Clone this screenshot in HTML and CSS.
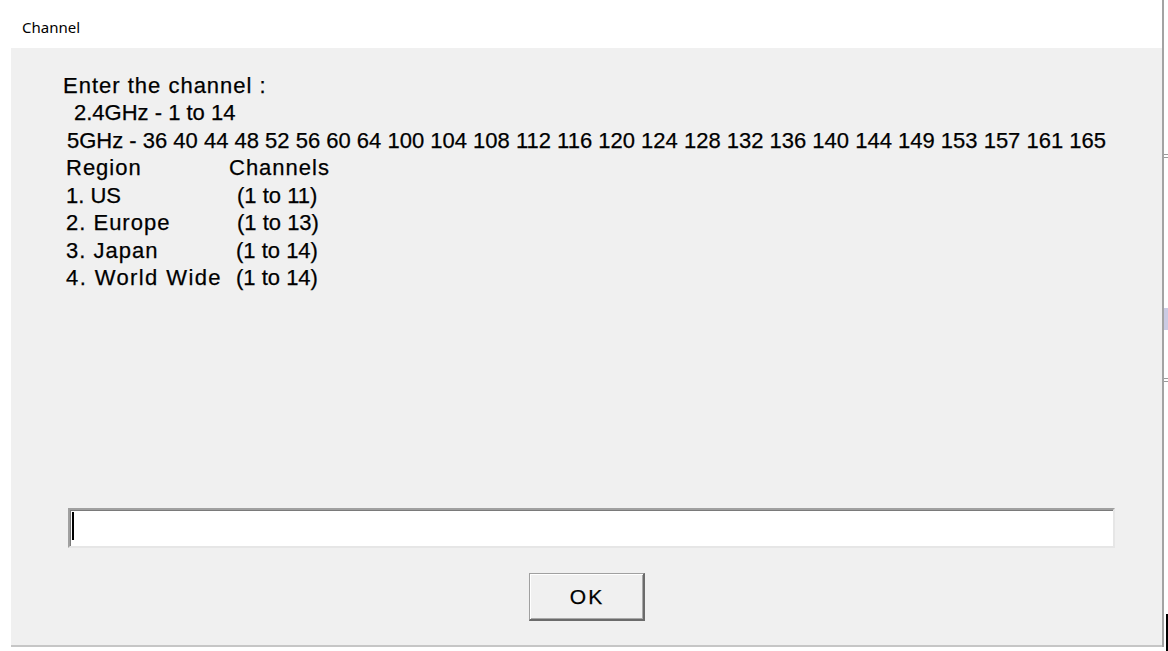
FILE: index.html
```html
<!DOCTYPE html>
<html>
<head>
<meta charset="utf-8">
<title>Channel</title>
<link rel="stylesheet" href="styles.css">
</head>
<body>
<div class="screen">
  <div class="window">
    <div class="titlebar">Channel</div>
    <div class="panel">
      <div class="message">
        <div class="line wide shift-enter">Enter the channel :</div>
        <div class="line shift-24">2.4GHz - 1 to 14</div>
        <div class="line shift-5">5GHz - 36 40 44 48 52 56 60 64 100 104 108 112 116 120 124 128 132 136 140 144 149 153 157 161 165</div>
        <div class="row"><span class="region wide">Region</span><span class="chan-head wide">Channels</span></div>
        <div class="row"><span class="region">1. US</span><span class="chan">(1 to 11)</span></div>
        <div class="row"><span class="region wide">2. Europe</span><span class="chan">(1 to 13)</span></div>
        <div class="row"><span class="region wide">3. Japan</span><span class="chan chan-b">(1 to 14)</span></div>
        <div class="row"><span class="region wider">4. World Wide</span><span class="chan chan-b">(1 to 14)</span></div>
      </div>
      <div class="field"><span class="caret"></span></div>
      <div class="actions"><div class="btn">OK</div></div>
    </div>
  </div>
  <div class="edge">
    <span class="vline"></span>
    <span class="tick tick-a"></span>
    <span class="tick tick-b"></span>
    <span class="patch"></span>
    <span class="tick tick-c"></span>
    <span class="tick tick-d"></span>
    <span class="blackbar"></span>
  </div>
</div>
</body>
</html>
```

FILE: styles.css
```css
html, body {
  margin: 0;
  padding: 0;
  background: #ffffff;
}

.screen {
  width: 1168px;
  height: 651px;
  display: flex;
  overflow: hidden;
}

.window {
  width: 1162px;
  display: flex;
  flex-direction: column;
}

.titlebar {
  height: 48px;
  box-sizing: border-box;
  padding: 17px 0 0 22px;
  font-family: "Noto Sans", "Open Sans", sans-serif;
  font-size: 15px;
  line-height: 20px;
  color: #000;
}

.panel {
  margin-left: 11px;
  height: 599px;
  box-sizing: border-box;
  background: #f0f0f0;
  border-bottom: 2px solid #c6c6c6;
  padding: 24px 0 24px 0;
  display: flex;
  flex-direction: column;
}

.message {
  padding-left: 55px;
  font-family: "Liberation Sans", Arial, sans-serif;
  font-size: 22px;
  line-height: 27.43px;
  color: #000;
  white-space: nowrap;
  -webkit-text-stroke: 0.25px #000;
}

.line {
  display: block;
}

.wide { letter-spacing: 1px; }
.wider { letter-spacing: 1.4px; }

.shift-enter { margin-left: -3px; }
.shift-24 { margin-left: 8px; }
.shift-5 { margin-left: 1px; }

.row {
  display: flex;
}

.region {
  width: 163px;
}

.chan {
  padding-left: 8px;
}

.chan-b {
  padding-left: 7px;
}

.field {
  margin-top: auto;
  margin-left: 57px;
  width: 1047px;
  height: 40px;
  box-sizing: border-box;
  background: #ffffff;
  border-top: 2px solid #a0a0a0;
  border-left: 2px solid #a0a0a0;
  border-right: 2px solid #e6e6e6;
  border-bottom: 2px solid #e6e6e6;
  box-shadow: inset 1px 1px 0 #7a7a7a;
  padding: 2px 0 0 2px;
}

.caret {
  display: block;
  width: 2px;
  height: 28px;
  background: #000;
}

.actions {
  margin-top: 25px;
  display: flex;
  justify-content: center;
}

.btn {
  width: 116px;
  height: 48px;
  box-sizing: border-box;
  background: #f0f0f0;
  border-top: 1px solid #a0a0a0;
  border-left: 1px solid #a0a0a0;
  border-right: 2px solid #6b6b6b;
  border-bottom: 2px solid #6b6b6b;
  box-shadow: inset 1px 1px 0 #ffffff, inset -1px -1px 0 #a8a8a8;
  display: flex;
  align-items: center;
  justify-content: center;
  padding-left: 2px;
  font-family: "Liberation Sans", Arial, sans-serif;
  font-size: 21px;
  letter-spacing: 2px;
  color: #000;
  -webkit-text-stroke: 0.25px #000;
}

.edge {
  position: relative;
  width: 6px;
  height: 651px;
}

.vline {
  position: absolute;
  left: 0;
  top: 0;
  width: 2px;
  height: 647px;
  background: #a3a3a3;
}

.tick {
  position: absolute;
  left: 2px;
  width: 4px;
  height: 1px;
  background: #9a9a9a;
}

.tick-a { top: 154px; }
.tick-b { top: 157px; }
.tick-c { top: 378px; }
.tick-d { top: 381px; }

.patch {
  position: absolute;
  left: 2px;
  top: 308px;
  width: 4px;
  height: 22px;
  background: #cbcbe3;
}

.blackbar {
  position: absolute;
  left: 4px;
  top: 614px;
  width: 2px;
  height: 37px;
  background: #000;
}
```
